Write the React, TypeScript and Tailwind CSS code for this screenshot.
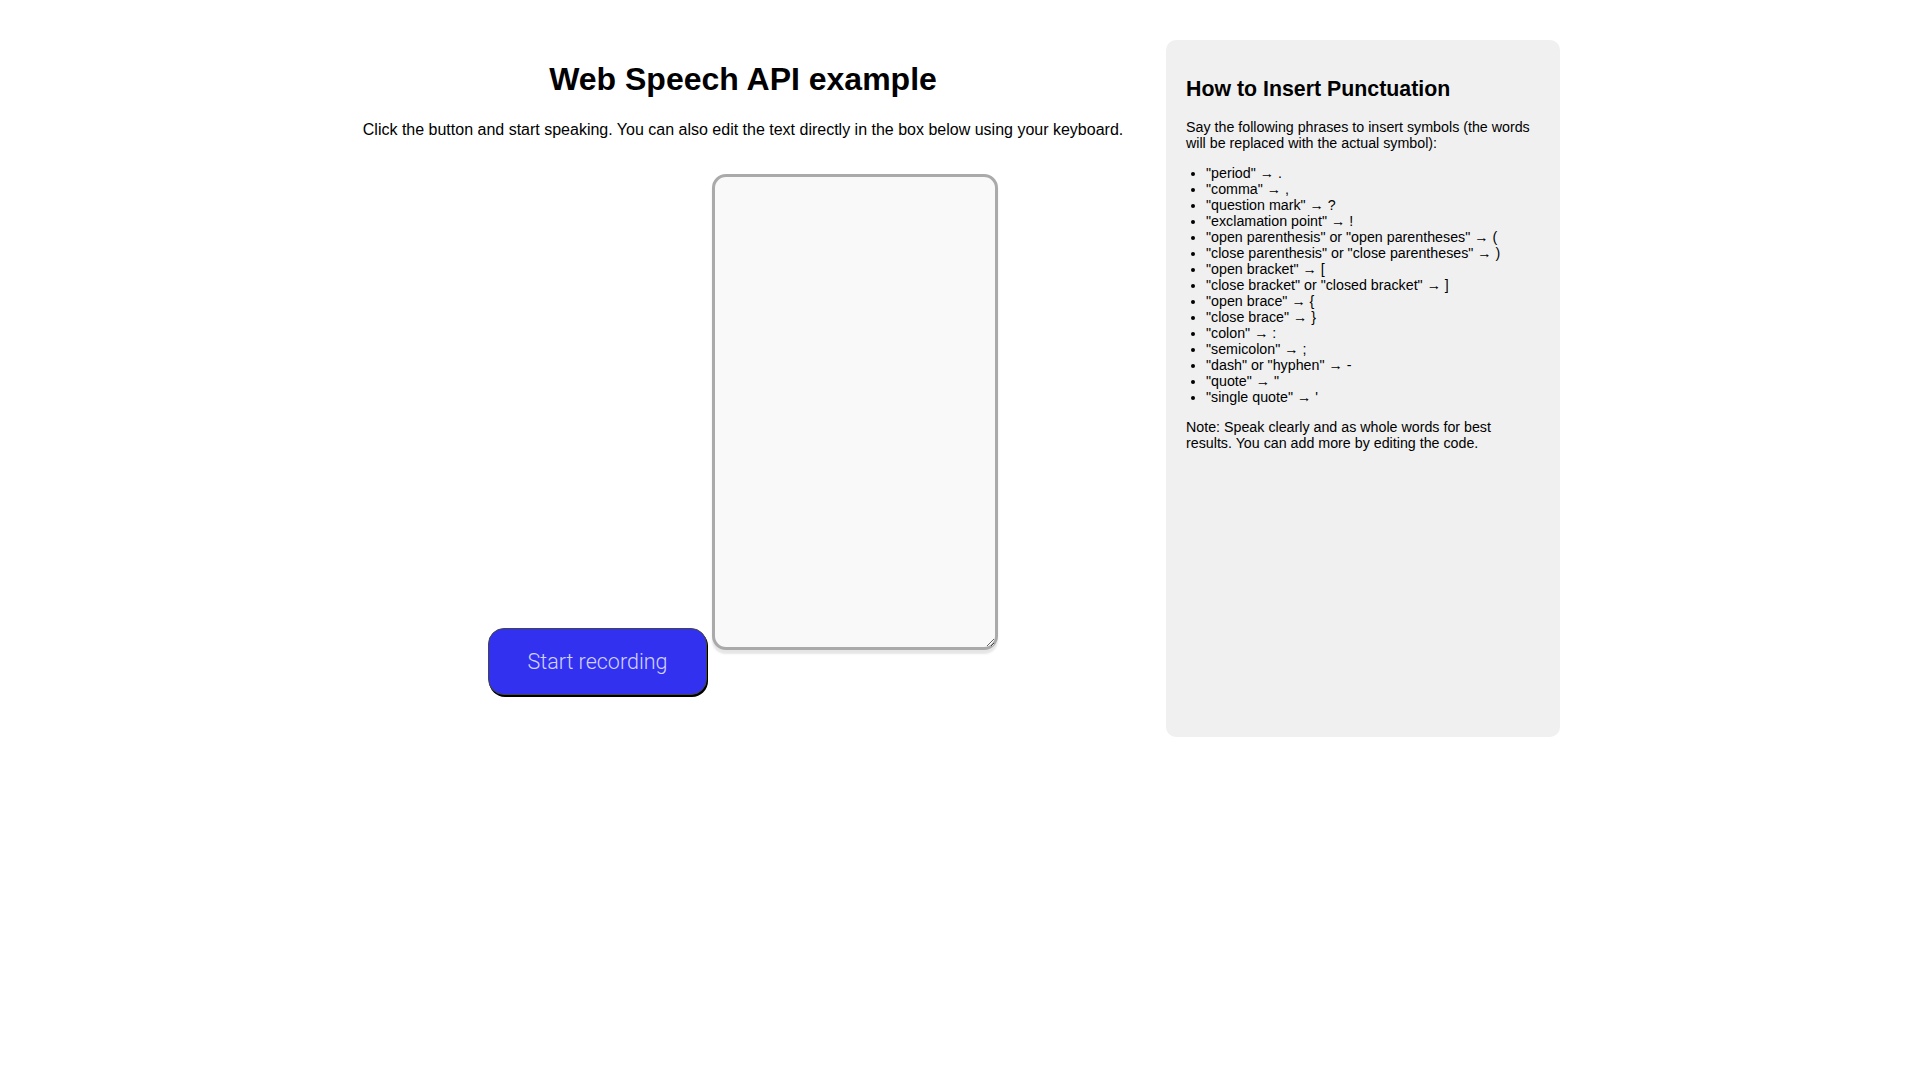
import React from "react";

const phrases: [string, string][] = [
  ['"period"', "."],
  ['"comma"', ","],
  ['"question mark"', "?"],
  ['"exclamation point"', "!"],
  ['"open parenthesis" or "open parentheses"', "("],
  ['"close parenthesis" or "close parentheses"', ")"],
  ['"open bracket"', "["],
  ['"close bracket" or "closed bracket"', "]"],
  ['"open brace"', "{"],
  ['"close brace"', "}"],
  ['"colon"', ":"],
  ['"semicolon"', ";"],
  ['"dash" or "hyphen"', "-"],
  ['"quote"', '"'],
  ['"single quote"', "'"],
];

export default function App() {
  return (
    <div className="min-h-screen bg-white text-black font-['Liberation_Sans',Arial,sans-serif]">
      <div className="mx-auto flex max-w-[1200px] gap-10 pt-10">
        <div className="flex flex-1 flex-col items-center pb-[42px]">
          <h1 className="mt-[20.5px] mb-[23.5px] text-[32px] font-bold leading-[37px]">
            Web Speech API example
          </h1>
          <p className="text-[16px] leading-[18.4px]">
            Click the button and start speaking. You can also edit the text directly in the box below using your keyboard.
          </p>
          <div className="mt-[35px] flex items-end justify-center gap-[5px]">
            <button className="flex h-[67px] w-[219px] items-center justify-center rounded-[16px] border-[1.5px] border-[#454545] bg-[#3131ef] font-['Roboto',sans-serif] text-[21.5px] font-light text-[#d2d2ff] shadow-[1px_2px_0_#000]">
              Start recording
            </button>
            <textarea
              className="mb-[45px] h-[476px] w-[286px] rounded-[14px] border-[3px] border-[#aaaaaa] bg-[#f9f9f9] p-2 text-[16px] shadow-[0_4px_2px_rgba(0,0,0,0.1)] outline-none"
              defaultValue=""
            />
          </div>
        </div>
        <div className="w-[394px] shrink-0 rounded-[10px] bg-[#f0f0f0] px-5 pt-5 text-[14.25px] leading-[16px]">
          <h3 className="mt-[16.5px] mb-[18.5px] text-[21.33px] font-bold leading-[24px]">
            How to Insert Punctuation
          </h3>
          <p>
            Say the following phrases to insert symbols (the words will be replaced with the actual symbol):
          </p>
          <ul className="my-[14px] list-disc pl-5">
            {phrases.map(([k, v]) => (
              <li key={k}>
                {k} → {v}
              </li>
            ))}
          </ul>
          <p>
            Note: Speak clearly and as whole words for best results. You can add more by editing the code.
          </p>
        </div>
      </div>
    </div>
  );
}
